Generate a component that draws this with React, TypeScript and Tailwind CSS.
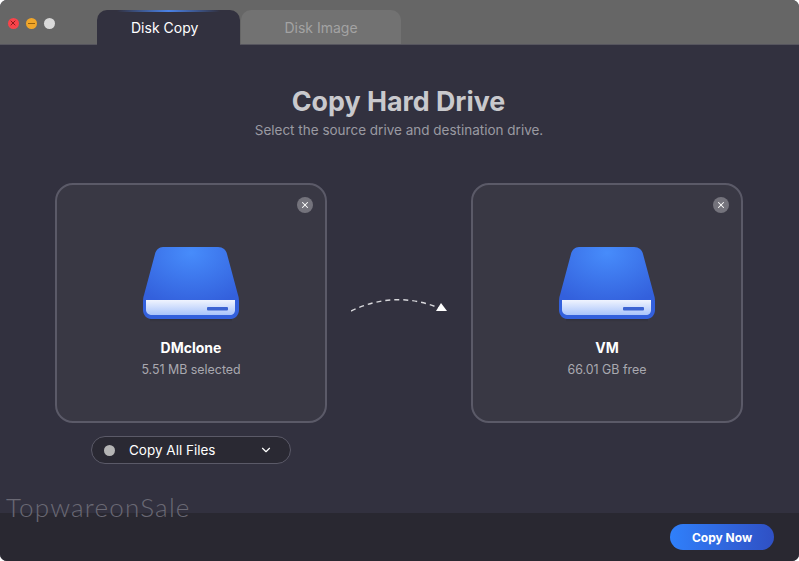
import { ChevronDown, X } from 'lucide-react';

function DiskIcon() {
  return (
    <svg width="98" height="76" viewBox="0 0 98 76" className="block">
      <defs>
        <radialGradient id="top" cx="50%" cy="8%" r="75%">
          <stop offset="0%" stopColor="#478cfb" />
          <stop offset="100%" stopColor="#3360dc" />
        </radialGradient>
        <linearGradient id="face" x1="0" y1="0" x2="0" y2="1">
          <stop offset="0%" stopColor="#f0f4fe" />
          <stop offset="100%" stopColor="#a9c4fb" />
        </linearGradient>
        <linearGradient id="shade" x1="0" y1="0" x2="0" y2="1">
          <stop offset="0%" stopColor="#000" stopOpacity="0.25" />
          <stop offset="100%" stopColor="#000" stopOpacity="0" />
        </linearGradient>
      </defs>
      <rect x="8" y="71" width="82" height="5" fill="url(#shade)" />
      <path
        d="M21 1 H76 C81 1 84 4 85 8 L96 49 C97 52 97 54 97 58 V64 C97 69 93 73 89 73 H9 C5 73 1 69 1 64 V58 C1 54 1 52 2 49 L13 8 C14 4 17 1 21 1 Z"
        fill="url(#top)"
      />
      <path d="M4 54 H93 V64 C93 67 91 69 88 69 H10 C7 69 4 67 4 64 Z" fill="url(#face)" />
      <rect x="65" y="61" width="21" height="3.5" rx="1" fill="#3b63d2" />
    </svg>
  );
}

function DriveCard({ name, info }: { name: string; info: string }) {
  return (
    <div className="relative w-[272px] h-[240px] rounded-[18px] border-2 border-[#5b5a68] bg-[#393844] flex flex-col items-center pt-[61px]">
      <div className="absolute top-[12px] right-[12px] w-4 h-4 rounded-full bg-[#74737c] flex items-center justify-center">
        <X size={10} strokeWidth={2.5} className="text-white" />
      </div>
      <DiskIcon />
      <div className="mt-[16px] text-[14px] leading-[20px] font-bold text-white">{name}</div>
      <div className="mt-[3px] text-[12.4px] leading-[18px] text-[#a9a9b0]">{info}</div>
    </div>
  );
}

function Arrow() {
  return (
    <svg width="144" height="40" viewBox="0 0 144 40" className="block">
      <path d="M0 27 Q 44 6 88 24" fill="none" stroke="#d8d8dc" strokeWidth="1.4" strokeDasharray="5 4" />
      <polygon points="90,19 96,27 85,27" fill="#ffffff" />
    </svg>
  );
}

export default function App() {
  return (
    <div className="w-[799px] h-[561px] bg-white overflow-hidden" style={{ fontFamily: 'Inter, "Liberation Sans", sans-serif' }}>
      <div className="relative w-full h-full rounded-[7px] overflow-hidden flex flex-col bg-[#32313f]">
        {/* title bar */}
        <div className="h-[45px] shrink-0 bg-[#666666] border-b border-[#56555e] flex">
          <div className="w-[97px] flex items-start gap-[6.5px] pl-[7.5px] pt-[17.5px]">
            <span className="w-[11.5px] h-[11.5px] rounded-full bg-[#f8434a] flex items-center justify-center">
              <X size={8} strokeWidth={3} className="text-[#8c1a1e]" />
            </span>
            <span className="w-[11.5px] h-[11.5px] rounded-full bg-[#f0a62a] flex items-center justify-center">
              <span className="w-[7px] h-[1.5px] bg-[#94600e]" />
            </span>
            <span className="w-[11.5px] h-[11.5px] rounded-full bg-[#d9d9d9]" />
          </div>
          <div className="relative w-[143px] h-[35px] mt-[10px] rounded-t-[10px] bg-[#32313f] flex items-center pl-[34px] text-[14px] text-white">
            <span className="absolute top-0 left-[20px] right-[20px] h-[1.5px] bg-gradient-to-r from-transparent via-[#4a82e8] to-transparent" />
            Disk Copy
          </div>
          <div className="w-[160px] h-[34px] mt-[10px] ml-[1px] rounded-t-[10px] bg-[#727272] flex items-center justify-center text-[14px] text-[#a3a3a3]">
            Disk Image
          </div>
        </div>

        {/* main */}
        <div className="relative flex-1 flex flex-col items-center">
          <h1 className="mt-[39px] -ml-[2px] text-[26.8px] leading-[34px] font-bold text-[#c9c9cd]">Copy Hard Drive</h1>
          <p className="mt-[2px] -ml-[1px] text-[13.5px] leading-[20px] text-[#9a9aa2]">Select the source drive and destination drive.</p>
          <div className="mt-[43px] w-full pl-[55px] flex items-start">
            <div className="flex flex-col items-center">
              <DriveCard name="DMclone" info="5.51 MB selected" />
              <div className="mt-[13px] w-[200px] h-[28px] rounded-full border border-[#5b5a68] bg-[#2a2933] flex items-center pl-[12px] pr-[17px] text-[13.5px] text-white">
                <span className="w-[11px] h-[11px] rounded-full bg-[#b5b5b5]" />
                <span className="ml-[14px] flex-1 pt-[1px]">Copy All Files</span>
                <ChevronDown size={14} strokeWidth={2} />
              </div>
            </div>
            <div className="w-[144px] pt-[101px] pl-[24px]">
              <Arrow />
            </div>
            <DriveCard name="VM" info="66.01 GB free" />
          </div>
          <div className="absolute left-[6px] bottom-[-10px] text-[26px] leading-[32px] font-light tracking-[1.2px] text-[#6a6974]" style={{ fontFamily: 'Lato, sans-serif' }}>
            TopwareonSale
          </div>
        </div>

        {/* footer */}
        <div className="h-[48px] shrink-0 bg-[#292831] flex items-start justify-end pt-[11px] pr-[25px]">
          <button className="w-[104px] h-[26px] pt-[1px] rounded-full bg-gradient-to-r from-[#2f80fb] to-[#2f50c4] text-[12px] font-bold text-white">
            Copy Now
          </button>
        </div>
      </div>
    </div>
  );
}
